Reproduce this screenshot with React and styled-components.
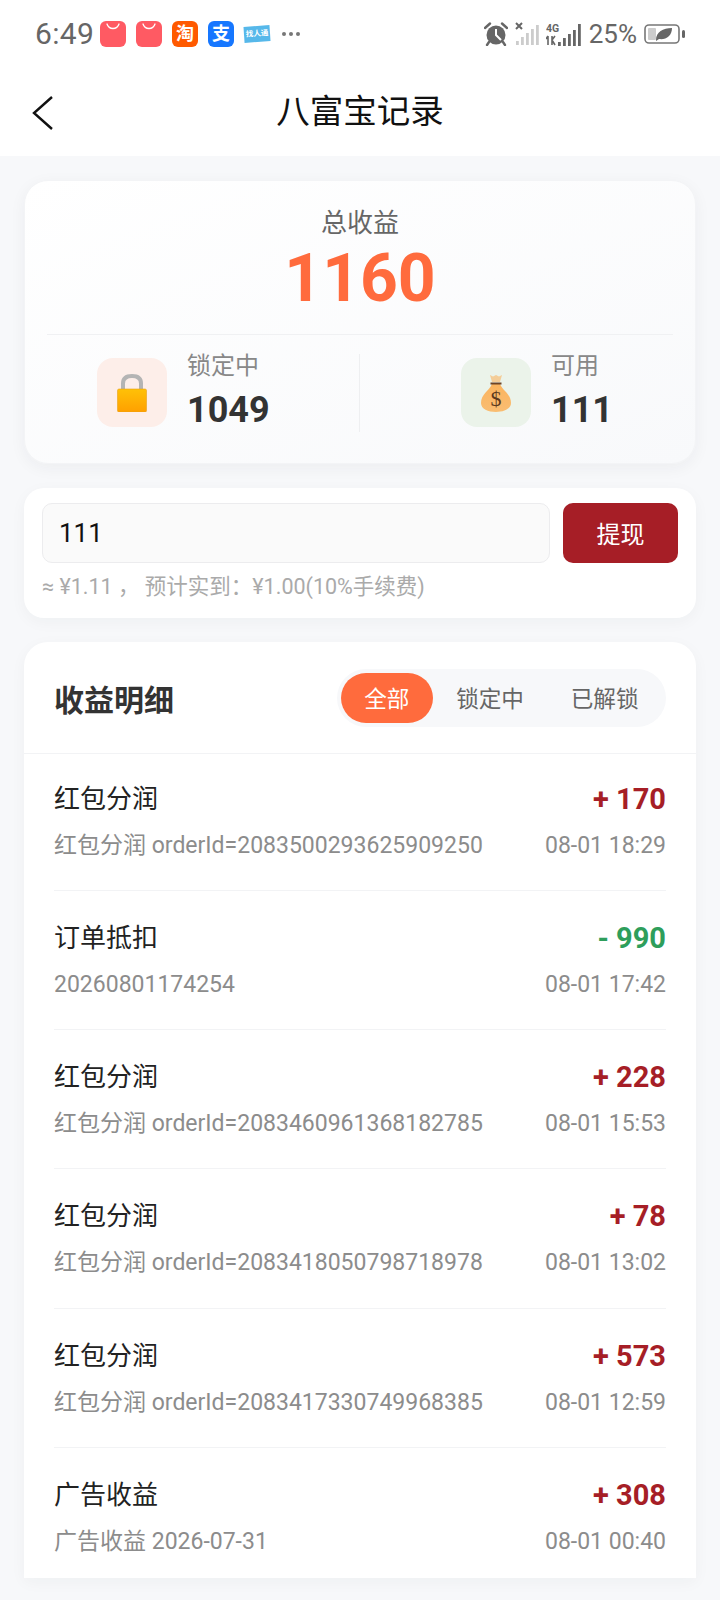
import React from "react";
import styled, { createGlobalStyle } from "styled-components";

const GlobalStyle = createGlobalStyle`
  html, body { margin: 0; padding: 0; background: #f7f8fa; }
  * { box-sizing: border-box; }
`;

const FONT = `Roboto, "Noto Sans CJK SC", sans-serif`;

const Page = styled.div`
  width: 720px;
  height: 1600px;
  overflow: hidden;
  background: #f7f8fa;
  font-family: ${FONT};
`;

const StatusBar = styled.div`
  height: 68px;
  background: #fff;
  display: flex;
  align-items: center;
  justify-content: space-between;
  padding: 0 34px 0 35px;
  color: #666;
`;

const StatusGroup = styled.div`
  display: flex;
  align-items: center;
  gap: ${(p) => p.$gap || 10}px;
`;

const Time = styled.span`
  font-size: 30px;
  line-height: 30px;
  margin-right: -4px;
  letter-spacing: 0.3px;
`;

const AppIcon = styled.div`
  width: 26px;
  height: 26px;
  border-radius: 6px;
  background: ${(p) => p.$bg};
  color: #fff;
  display: flex;
  align-items: center;
  justify-content: center;
  font-size: 18px;
  line-height: 1;
  font-weight: 700;
`;

const TagIcon = styled.div`
  width: 26px;
  height: 16px;
  background: #56b8ea;
  color: #fff;
  font-size: 7.5px;
  font-weight: 700;
  line-height: 16px;
  text-align: center;
  white-space: nowrap;
  transform: rotate(-4deg);
`;

const Dots = styled.span`
  display: flex;
  gap: 3px;
  margin-left: 2px;
  i {
    width: 4px;
    height: 4px;
    border-radius: 50%;
    background: #777;
  }
`;

const Percent = styled.span`
  font-size: 26px;
  line-height: 26px;
  color: #666;
`;

const NavBar = styled.div`
  height: 88px;
  background: #fff;
  display: flex;
  align-items: center;
  justify-content: center;
  position: relative;
  padding-bottom: 0;
`;

const BackIcon = styled.svg`
  position: absolute;
  left: 31px;
  top: 27px;
`;

const NavTitle = styled.div`
  font-size: 33.5px;
  line-height: 48px;
  color: #111;
  margin-top: 0;
`;

const Main = styled.div`
  padding: 24px 24px 0;
  display: flex;
  flex-direction: column;
  gap: 24px;
`;

const SummaryCard = styled.div`
  height: 284px;
  border-radius: 24px;
  background: linear-gradient(160deg, #ffffff 0%, #f8f9fb 100%);
  box-shadow: 0 4px 16px rgba(30, 40, 60, 0.05);
  border: 1px solid #f3f4f6;
  padding: 24px 22px 0;
`;

const TotalLabel = styled.div`
  text-align: center;
  font-size: 26px;
  line-height: 36px;
  color: #666;
`;

const TotalValue = styled.div`
  text-align: center;
  font-size: 66px;
  line-height: 76px;
  font-weight: 700;
  color: #ff6b3d;
  margin-top: 0;
`;

const Stats = styled.div`
  margin-top: 17px;
  border-top: 1px solid #f0f1f3;
  display: grid;
  grid-template-columns: 1fr 1fr;
  padding-top: 19px;
`;

const Stat = styled.div`
  display: flex;
  align-items: flex-start;
  gap: 20px;
  height: 78px;
  padding-left: ${(p) => p.$left}px;
  ${(p) => p.$divided && "border-right: 1px solid #eeeff1;"}
`;

const StatIcon = styled.div`
  width: 70px;
  height: 69px;
  margin-top: 4px;
  border-radius: 16px;
  background: ${(p) => p.$bg};
  display: flex;
  align-items: center;
  justify-content: center;
`;

const StatLabel = styled.div`
  font-size: 24px;
  line-height: 30px;
  color: #888;
  margin-top: -3px;
`;

const StatValue = styled.div`
  font-size: 36px;
  line-height: 42px;
  font-weight: 700;
  color: #333;
  margin-top: 8px;
`;

const WithdrawCard = styled.div`
  height: 130px;
  border-radius: 20px;
  background: #fff;
  box-shadow: 0 4px 16px rgba(30, 40, 60, 0.04);
  padding: 15px 18px 0;
`;

const WithdrawRow = styled.div`
  display: flex;
  gap: 13px;
`;

const AmountInput = styled.input`
  flex: 1;
  min-width: 0;
  height: 60px;
  border: 1px solid #ececee;
  border-radius: 10px;
  background: #fafafa;
  padding: 0 16px;
  font-family: ${FONT};
  font-size: 26px;
  color: #111;
  outline: none;
`;

const WithdrawButton = styled.button`
  width: 115px;
  height: 60px;
  border: none;
  border-radius: 10px;
  background: #a61e26;
  color: #fff;
  font-family: ${FONT};
  font-size: 24px;
  padding: 0 0 2px;
`;

const Hint = styled.div`
  margin-top: 8px;
  font-size: 21.5px;
  line-height: 32px;
  color: #aaa;
  white-space: pre;
`;

const DetailCard = styled.div`
  height: 936px;
  overflow: hidden;
  border-radius: 24px 24px 0 0;
  background: #fff;
  box-shadow: 0 4px 16px rgba(30, 40, 60, 0.04);
`;

const DetailHeader = styled.div`
  height: 112px;
  display: flex;
  align-items: center;
  justify-content: space-between;
  padding: 0 30px;
  border-bottom: 1px solid #f2f3f5;
`;

const DetailTitle = styled.div`
  font-size: 30px;
  font-weight: 700;
  color: #333;
`;

const Tabs = styled.div`
  display: flex;
  align-items: center;
  width: 329px;
  height: 58px;
  padding: 0 4px;
  border-radius: 29px;
  background: #f7f8fa;
`;

const Tab = styled.div`
  height: 50px;
  width: ${(p) => p.$width}px;
  border-radius: 25px;
  display: flex;
  align-items: center;
  justify-content: center;
  font-size: 22.6px;
  color: ${(p) => (p.$active ? "#fff" : "#666")};
  background: ${(p) => (p.$active ? "#ff6b3d" : "transparent")};
`;

const List = styled.div`
  padding: 0 30px;
`;

const Row = styled.div`
  height: 139.2px;
  padding-top: 25px;
  border-bottom: 1px solid #f2f3f5;
  &:last-child { border-bottom: none; }
  &:first-child { height: 137px; padding-top: 23px; }
`;

const RowLine = styled.div`
  display: flex;
  align-items: center;
  justify-content: space-between;
  white-space: nowrap;
`;

const RowTitle = styled.div`
  font-size: 26px;
  line-height: 44px;
  color: #222;
`;

const RowAmount = styled.div`
  font-size: 29px;
  line-height: 44px;
  font-weight: 700;
  color: ${(p) => (p.$minus ? "#2e9e5b" : "#a61e26")};
`;

const RowSub = styled.div`
  font-size: 23px;
  line-height: 36px;
  margin-top: 7px;
  color: #8c8c8c;
`;

const bars = [4, 8, 12, 16, 20];

const BagGlyph = () => (
  <svg width="16" height="8" viewBox="0 0 16 8" style={{ marginBottom: 14 }}>
    <path d="M2 1 C4 7 12 7 14 1" fill="none" stroke="#fff" strokeWidth="1.3" strokeLinecap="round" />
  </svg>
);

const AlarmIcon = () => (
  <svg width="24" height="24" viewBox="0 0 24 24">
    <circle cx="12" cy="13" r="9.5" fill="#666" />
    <path d="M12 7 V13 L17 18" fill="none" stroke="#fff" strokeWidth="2" />
    <path d="M1 6 L6 1.5 M23 6 L18 1.5" stroke="#666" strokeWidth="2.4" strokeLinecap="round" />
    <path d="M5 20 L3 23 M19 20 L21 23" stroke="#666" strokeWidth="2.4" strokeLinecap="round" />
  </svg>
);

const EmptySignal = () => (
  <svg width="24" height="24" viewBox="0 0 24 24">
    <path d="M1 1 L7 7 M7 1 L1 7" stroke="#666" strokeWidth="2" />
    {bars.map((h, i) => (
      <rect key={h} x={1 + i * 5} y={23 - h} width="2.8" height={h} fill="#ccc" />
    ))}
  </svg>
);

const Signal4G = () => (
  <svg width="36" height="24" viewBox="0 0 36 24">
    <text x="0" y="10" fontFamily="Roboto, sans-serif" fontSize="10.5" fontWeight="700" fill="#666">4G</text>
    <path d="M2 14 V23 M2 14 L0 17 M6 14 V23 M6 18 L9 14 M6 18 L9 23" stroke="#666" strokeWidth="1.6" fill="none" />
    {[4, 8, 12, 16, 22].map((h, i) => (
      <rect key={h} x={12 + i * 5} y={24 - h} width="2.8" height={h} fill="#666" />
    ))}
  </svg>
);

const BatteryIcon = () => (
  <svg width="42" height="20" viewBox="0 0 42 20">
    <rect x="1" y="1" width="34" height="18" rx="4" fill="none" stroke="#777" strokeWidth="1.6" />
    <rect x="4" y="4" width="8" height="12" rx="1" fill="#ccc" />
    <path d="M12 16 C12 8 19 4 28 4 C28 12 22 16 15 15 L12 17 Z" fill="#666" />
    <rect x="38" y="6" width="3" height="8" rx="1.5" fill="#666" />
  </svg>
);

const LockIcon = () => (
  <svg width="30" height="38" viewBox="0 0 30 38">
    <defs>
      <linearGradient id="lockBody" x1="0" y1="0" x2="0" y2="1">
        <stop offset="0" stopColor="#ffc107" />
        <stop offset="1" stopColor="#ffa000" />
      </linearGradient>
    </defs>
    <path d="M6 16 V9.5 C6 4.5 9 2 15 2 C21 2 24 4.5 24 9.5 V16" fill="none" stroke="#b4b4b4" strokeWidth="4" />
    <rect x="0.5" y="15" width="29" height="23" rx="1.5" fill="url(#lockBody)" stroke="#e8a317" strokeWidth="0.6" />
  </svg>
);

const MoneyIcon = () => (
  <svg width="32" height="38" viewBox="0 0 32 38">
    <defs>
      <linearGradient id="bagBody" x1="0" y1="0" x2="0" y2="1">
        <stop offset="0" stopColor="#fbb45e" />
        <stop offset="1" stopColor="#f9bd72" />
      </linearGradient>
    </defs>
    <path d="M10 1 L13 2.5 L16 1 L19 2.5 L22 1 L20 8 L12 8 Z" fill="#f4cd98" />
    <path d="M12 10 C9 17 1 20 1 29 C1 35 8 38 16 38 C24 38 31 35 31 29 C31 20 23 17 20 10 Z" fill="url(#bagBody)" />
    <rect x="10.5" y="8.5" width="11" height="2" fill="#6d4426" />
    <text x="16" y="32" textAnchor="middle" fontFamily="'Liberation Serif', serif" fontSize="22" fill="#5c3a1e">$</text>
  </svg>
);

const records = [
  { title: "红包分润", amount: "+ 170", sub: "红包分润 orderId=2083500293625909250", time: "08-01 18:29" },
  { title: "订单抵扣", amount: "- 990", minus: true, sub: "20260801174254", time: "08-01 17:42" },
  { title: "红包分润", amount: "+ 228", sub: "红包分润 orderId=2083460961368182785", time: "08-01 15:53" },
  { title: "红包分润", amount: "+ 78", sub: "红包分润 orderId=2083418050798718978", time: "08-01 13:02" },
  { title: "红包分润", amount: "+ 573", sub: "红包分润 orderId=2083417330749968385", time: "08-01 12:59" },
  { title: "广告收益", amount: "+ 308", sub: "广告收益 2026-07-31", time: "08-01 00:40" },
];

export default function App() {
  return (
    <Page>
      <GlobalStyle />
      <StatusBar>
        <StatusGroup>
          <Time>6:49</Time>
          <AppIcon $bg="#ff5a63"><BagGlyph /></AppIcon>
          <AppIcon $bg="#ff5a63"><BagGlyph /></AppIcon>
          <AppIcon $bg="#ff5a00">淘</AppIcon>
          <AppIcon $bg="#1677ff">支</AppIcon>
          <TagIcon>找人通</TagIcon>
          <Dots><i /><i /><i /></Dots>
        </StatusGroup>
        <StatusGroup $gap={7}>
          <AlarmIcon />
          <EmptySignal />
          <Signal4G />
          <Percent>25%</Percent>
          <BatteryIcon />
        </StatusGroup>
      </StatusBar>
      <NavBar>
        <BackIcon width="24" height="36" viewBox="0 0 24 36">
          <path d="M21 2 L3 18 L21 34" fill="none" stroke="#111" strokeWidth="2.4" />
        </BackIcon>
        <NavTitle>八富宝记录</NavTitle>
      </NavBar>
      <Main>
        <SummaryCard>
          <TotalLabel>总收益</TotalLabel>
          <TotalValue>1160</TotalValue>
          <Stats>
            <Stat $left={50} $divided>
              <StatIcon $bg="#fdeee9"><LockIcon /></StatIcon>
              <div>
                <StatLabel>锁定中</StatLabel>
                <StatValue>1049</StatValue>
              </div>
            </Stat>
            <Stat $left={101}>
              <StatIcon $bg="#ebf3ea"><MoneyIcon /></StatIcon>
              <div>
                <StatLabel>可用</StatLabel>
                <StatValue>111</StatValue>
              </div>
            </Stat>
          </Stats>
        </SummaryCard>
        <WithdrawCard>
          <WithdrawRow>
            <AmountInput value="111" readOnly />
            <WithdrawButton>提现</WithdrawButton>
          </WithdrawRow>
          <Hint>≈ ¥1.11 ， 预计实到：¥1.00(10%手续费)</Hint>
        </WithdrawCard>
        <DetailCard>
          <DetailHeader>
            <DetailTitle>收益明细</DetailTitle>
            <Tabs>
              <Tab $active $width={92}>全部</Tab>
              <Tab $width={115}>锁定中</Tab>
              <Tab $width={115}>已解锁</Tab>
            </Tabs>
          </DetailHeader>
          <List>
            {records.map((r, i) => (
              <Row key={i}>
                <RowLine>
                  <RowTitle>{r.title}</RowTitle>
                  <RowAmount $minus={r.minus}>{r.amount}</RowAmount>
                </RowLine>
                <RowLine>
                  <RowSub>{r.sub}</RowSub>
                  <RowSub>{r.time}</RowSub>
                </RowLine>
              </Row>
            ))}
          </List>
        </DetailCard>
      </Main>
    </Page>
  );
}
